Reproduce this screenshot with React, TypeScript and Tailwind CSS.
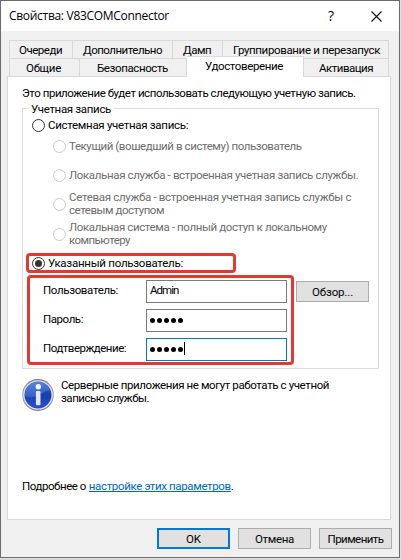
import type { ReactNode } from 'react';

function Tab({ children, className }: { children: ReactNode; className: string }) {
  return (
    <div className={`flex h-full items-center whitespace-nowrap border-r border-[#d9d9d9] ${className}`}>
      {children}
    </div>
  );
}

function Radio({ checked = false, disabled = false }: { checked?: boolean; disabled?: boolean }) {
  return (
    <span
      className={`flex size-[13px] shrink-0 items-center justify-center rounded-full border bg-white ${
        disabled ? 'border-[#cccccc]' : 'border-[#333333]'
      }`}
    >
      {checked && <span className="size-[7px] rounded-full bg-[#333333]" />}
    </span>
  );
}

function Option({ children, className }: { children: ReactNode; className: string }) {
  return (
    <div className={`flex items-center gap-[3px] text-[#6d6d6d] ${className}`}>
      <Radio disabled />
      <div className="whitespace-nowrap leading-[13px]">{children}</div>
    </div>
  );
}

function Field({ label, focused = false, children }: { label: ReactNode; focused?: boolean; children: ReactNode }) {
  return (
    <div className="flex h-[23px] items-center">
      <div className="-mt-[3px] w-[103px] shrink-0 whitespace-nowrap">{label}</div>
      <div
        className={`flex h-full w-[141px] shrink-0 items-center border bg-white pl-[3px] ${
          focused ? 'border-[#0078d7]' : 'border-[#7a7a7a]'
        }`}
      >
        {children}
      </div>
    </div>
  );
}

function Dots() {
  return (
    <div className="-mt-px flex gap-[2px]">
      {[0, 1, 2, 3, 4].map((i) => (
        <span key={i} className="size-[5px] rounded-full bg-black" />
      ))}
    </div>
  );
}

function Button({ children, primary = false }: { children: ReactNode; primary?: boolean }) {
  return (
    <button
      className={`flex h-[21px] w-[73px] items-center justify-center whitespace-nowrap bg-[#e1e1e1] ${
        primary ? 'border-2 border-[#0078d7]' : 'border border-[#adadad]'
      }`}
    >
      {children}
    </button>
  );
}

function InfoIcon() {
  return (
    <svg width="32" height="32" viewBox="0 0 32 32" className="shrink-0">
      <defs>
        <linearGradient id="ring" x1="0" y1="0" x2="0" y2="1">
          <stop offset="0" stopColor="#777" />
          <stop offset="0.5" stopColor="#b4b4b4" />
          <stop offset="1" stopColor="#777" />
        </linearGradient>
        <linearGradient id="face" x1="0" y1="0" x2="0" y2="1">
          <stop offset="0" stopColor="#3567d3" />
          <stop offset="0.5" stopColor="#173fae" />
          <stop offset="1" stopColor="#2850d8" />
        </linearGradient>
        <linearGradient id="shine" x1="0" y1="0" x2="0.4" y2="1">
          <stop offset="0" stopColor="#7fa6ee" />
          <stop offset="1" stopColor="#4775d5" />
        </linearGradient>
      </defs>
      <circle cx="16" cy="16" r="15.9" fill="url(#ring)" />
      <circle cx="16" cy="16" r="14.7" fill="#e6e6e6" />
      <circle cx="16" cy="16" r="13.5" fill="url(#face)" />
      <path d="M3 17A13 13 0 0 1 28.2 11.5C21 11.8 19 16 13 17.5C9 18.5 5 18.3 3 17Z" fill="url(#shine)" opacity="0.55" />
      <circle cx="16.3" cy="7.8" r="2.7" fill="#f8f8f8" />
      <rect x="13.9" y="12" width="4.6" height="14.2" rx="1" fill="#e5e7ed" />
    </svg>
  );
}

export default function App() {
  return (
    <div className="h-[559px] w-[401px] overflow-hidden bg-[#e2e2e2] font-['Roboto','Noto_Sans',sans-serif] text-[11.5px] leading-[14px] text-black">
      <div className="flex h-[558px] w-[400px] flex-col border border-[#6b6b6b] bg-[#f0f0f0]">
        <header className="flex h-[30px] shrink-0 items-center bg-white pl-2 pr-[17px]">
          <div className="flex-1 whitespace-nowrap font-['Open_Sans','Noto_Sans',sans-serif] text-[12px] tracking-[-0.3px]">
            Свойства: V83COMConnector
          </div>
          <div className="mr-[37px] font-['Open_Sans','Noto_Sans',sans-serif] text-[14px]">?</div>
          <svg width="11" height="11" viewBox="0 0 11 11">
            <path d="M.5.5l10 10M10.5.5l-10 10" stroke="#111" strokeWidth="1.1" />
          </svg>
        </header>

        <nav className="mt-[9px] px-2">
          <div className="flex h-[18px] w-[380px] border-l border-t border-[#d9d9d9]">
            <Tab className="w-[63px] pl-[9px] tracking-[-0.48px]">Очереди</Tab>
            <Tab className="w-[100px] pl-[10px] tracking-[-0.5px]">Дополнительно</Tab>
            <Tab className="w-[50px] pl-[10px] tracking-[-0.51px]">Дамп</Tab>
            <Tab className="w-[166px] pl-[10px] tracking-[-0.35px]">Группирование и перезапуск</Tab>
          </div>
          <div className="flex h-[18px] w-[380px] border-l border-[#d9d9d9]">
            <Tab className="w-[70px] border-t pl-[16px] tracking-[-0.28px]">Общие</Tab>
            <Tab className="w-[107px] border-t pl-[17px] tracking-[-0.39px]">Безопасность</Tab>
            <div className="z-10 -mt-[2px] flex h-[21px] w-[117px] border-r border-t border-[#d9d9d9] bg-white pl-[18px] pt-[2px] tracking-[-0.36px]">
              Удостоверение
            </div>
            <Tab className="w-[85px] border-t pl-[15px] tracking-[-0.5px]">Активация</Tab>
          </div>
        </nav>

        <main className="ml-[6px] flex h-[444px] w-[384px] shrink-0 flex-col border border-[#d9d9d9] bg-white pl-[14px]">
          <p className="mt-[9px] whitespace-nowrap tracking-[-0.44px]">
            Это приложение будет использовать следующую учетную запись.
          </p>

          <section className="mt-[8px] h-[261px] w-[357px] shrink-0 border border-[#dcdcdc]">
            <div className="-mt-[7px] ml-[6px] w-[85px] whitespace-nowrap bg-white pl-[2px] tracking-[-0.33px]">
              Учетная запись
            </div>
            <div className="ml-[9px] mt-[2px] flex h-[14px] items-center gap-[3px] whitespace-nowrap tracking-[-0.3px]">
              <Radio />
              Системная учетная запись:
            </div>
            <div className="ml-[30px] mt-[7px] flex flex-col">
              <Option className="h-[14px] tracking-[-0.42px]">Текущий (вошедший в систему) пользователь</Option>
              <Option className="mt-[15px] h-[14px] tracking-[-0.35px]">
                Локальная служба - встроенная учетная запись службы.
              </Option>
              <Option className="mt-[9px] h-[26px]">
                <div className="tracking-[-0.31px]">Сетевая служба - встроенная учетная запись службы с</div>
                <div className="tracking-[-0.46px]">сетевым доступом</div>
              </Option>
              <Option className="mt-[4px] h-[26px]">
                <div className="tracking-[-0.38px]">Локальная система - полный доступ к локальному</div>
                <div className="tracking-[-0.55px]">компьютеру</div>
              </Option>
            </div>

            <div className="ml-[3px] mt-[6px] flex h-[20px] w-[210px] items-center gap-[3px] whitespace-nowrap rounded-[4px] border-[3px] border-[#e23a30] pl-[3px] tracking-[-0.26px]">
              <Radio checked />
              Указанный пользователь:
            </div>

            <div className="ml-[4px] mt-[2px] flex items-start">
              <div className="flex h-[90px] w-[267px] shrink-0 flex-col gap-[6px] rounded-[4px] border-[3px] border-[#e23a30] pl-[13px] pt-[2px]">
                <Field label={<span className="tracking-[-0.35px]">Пользователь:</span>}>
                  <span className="-mt-[3px] tracking-[-0.95px]">Admin</span>
                </Field>
                <Field label={<span className="tracking-[-0.44px]">Пароль:</span>}>
                  <Dots />
                </Field>
                <Field focused label={<span className="tracking-[-0.48px]">Подтверждение:</span>}>
                  <Dots />
                  <span className="-mt-[3px] ml-[1px] h-[13px] w-px bg-black" />
                </Field>
              </div>
              <div className="ml-[2px] mt-[6px]">
                <Button>
                  <span className="tracking-[-0.15px]">Обзор...</span>
                </Button>
              </div>
            </div>
          </section>

          <div className="mt-[10px] flex gap-[7px] whitespace-nowrap">
            <InfoIcon />
            <div className="leading-[13px]">
              <div className="tracking-[-0.39px]">Серверные приложения не могут работать с учетной</div>
              <div className="tracking-[-0.47px]">записью службы.</div>
            </div>
          </div>

          <p className="mt-[68px] whitespace-nowrap">
            <span className="tracking-[-0.44px]">Подробнее о</span>{' '}
            <a className="tracking-[-0.36px] text-[#0066cc] underline decoration-1 underline-offset-[1px] [text-decoration-skip-ink:none]">
              настройке этих параметров
            </a>
            .
          </p>
        </main>

        <footer className="ml-[156px] mt-[8px] flex gap-[8px]">
          <Button primary>OK</Button>
          <Button>
            <span className="tracking-[-0.32px]">Отмена</span>
          </Button>
          <Button>
            <span className="tracking-[-0.55px]">Применить</span>
          </Button>
        </footer>
      </div>
    </div>
  );
}
